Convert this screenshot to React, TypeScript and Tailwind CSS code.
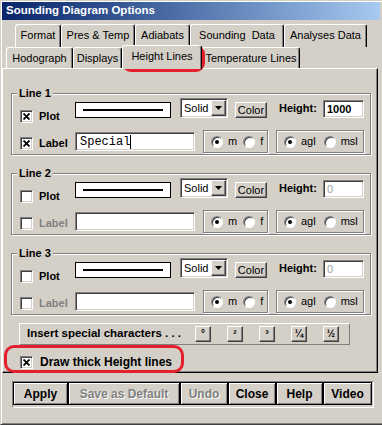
const sunken =
  "border border-t-[#808080] border-l-[#808080] border-r-white border-b-white bg-white shadow-[inset_1px_1px_0_#404040,inset_-1px_-1px_0_#d4d0c8]";
const etched = "border border-[#808080] shadow-[inset_1px_1px_0_#fff,1px_1px_0_#fff]";
const raised =
  "border border-t-white border-l-white border-r-[#404040] border-b-[#404040] bg-[#d4d0c8] shadow-[inset_-1px_-1px_0_#808080]";

function Check({ checked }: { checked?: boolean }) {
  return (
    <span className={`flex h-[13px] w-[13px] shrink-0 items-center justify-center ${sunken}`}>
      {checked && (
        <svg width="7" height="7" viewBox="0 0 7 7">
          <path d="M0.5 0.5L6.5 6.5M6.5 0.5L0.5 6.5" stroke="#000" strokeWidth="1.8" />
        </svg>
      )}
    </span>
  );
}

function Radio({ on }: { on?: boolean }) {
  return (
    <span className="flex h-[12px] w-[12px] shrink-0 items-center justify-center rounded-full border border-t-[#808080] border-l-[#808080] border-r-white border-b-white bg-white shadow-[inset_1px_1px_0_#404040]">
      {on && <span className="h-[4px] w-[4px] rounded-full bg-black" />}
    </span>
  );
}

function Tab({ label, className }: { label: string; className: string }) {
  return (
    <div
      className={`flex justify-center whitespace-pre rounded-t-[3px] border-l border-t border-r border-white border-r-black pt-[4px] text-[11px] leading-[13px] shadow-[inset_-1px_0_0_#808080] ${className}`}
    >
      {label}
    </div>
  );
}

function LineGroup({ n, on }: { n: number; on: boolean }) {
  return (
    <div className={`ml-[8px] h-[62px] w-[360px] pl-[8px] ${etched}`}>
      <div className="-ml-[3px] -mt-[7px] w-fit bg-[#d4d0c8] px-[2px] text-[11px] font-bold leading-[12px]">
        Line {n}
      </div>
      <div className="-mt-[1px] flex items-start">
        <div className="mt-[12px] flex w-[55px] items-center gap-[6px]">
          <Check checked={on} />
          <span className="text-[11px] font-bold leading-[13px]">Plot</span>
        </div>
        <div className="mt-[4px] flex h-[16px] w-[96px] items-center justify-center border border-black bg-white">
          <span className="h-[1.5px] w-[80px] bg-black" />
        </div>
        <div className={`ml-[9px] flex h-[20px] w-[48px] items-center pl-[3px] ${sunken}`}>
          <span className="flex-1 text-[11px] leading-[13px]">Solid</span>
          <span className={`mr-[1px] flex h-[16px] w-[15px] items-center justify-center ${raised}`}>
            <svg width="7" height="4" viewBox="0 0 7 4">
              <path d="M0 0H7L3.5 4Z" fill="#000" />
            </svg>
          </span>
        </div>
        <div className={`ml-[7px] mt-[4px] flex h-[16px] w-[32px] items-center justify-center text-[11px] leading-[13px] ${raised}`}>
          Color
        </div>
        <span className="ml-[12px] flex h-[20px] w-[44px] items-center text-[11px] font-bold">Height:</span>
        <div className={`mt-[2px] flex h-[18px] w-[41px] items-center pl-[3px] text-[11px] ${sunken}`}>
          {on ? <span className="font-bold">1000</span> : <span className="text-[#a0a0a0]">0</span>}
        </div>
      </div>
      <div className="mt-[7px] flex items-start">
        <div className="mt-[7px] flex w-[55px] items-center gap-[6px]">
          <Check checked={on} />
          <span className={`text-[11px] font-bold leading-[13px] ${on ? "text-black" : "text-[#808080]"}`}>Label</span>
        </div>
        <div className={`mt-[2px] flex h-[19px] w-[120px] items-center pl-[4px] ${sunken}`}>
          {on && (
            <>
              <span className="font-['Liberation_Mono',monospace] text-[12px] leading-[14px]">Special</span>
              <span className="h-[14px] w-px bg-black" />
            </>
          )}
        </div>
        <div className={`ml-[8px] flex h-[23px] w-[65px] items-center pl-[7px] text-[11px] ${etched}`}>
          <Radio on />
          <span className="ml-[5px]">m</span>
          <span className="ml-[6px]">
            <Radio />
          </span>
          <span className="ml-[5px]">f</span>
        </div>
        <div className={`ml-[8px] flex h-[23px] w-[88px] items-center pl-[7px] text-[11px] ${etched}`}>
          <Radio on />
          <span className="ml-[5px]">agl</span>
          <span className="ml-[8px]">
            <Radio />
          </span>
          <span className="ml-[5px]">msl</span>
        </div>
      </div>
    </div>
  );
}

function Btn({ label, className, off }: { label: string; className: string; off?: boolean }) {
  return (
    <div
      className={`flex h-[23px] items-center justify-center border border-black text-[12px] font-bold shadow-[inset_1px_1px_0_#fff,inset_-1px_-1px_0_#808080] ${
        off ? "text-[#808080] [text-shadow:1px_1px_0_#fff]" : "text-black"
      } ${className}`}
    >
      {label}
    </div>
  );
}

export default function App() {
  const specials = ["°", "²", "³", "¼", "½"];
  return (
    <div className="relative h-[425px] w-[382px] overflow-hidden border-l border-t border-b border-[#d4d0c8] border-b-[#404040] bg-[#d4d0c8] pl-[1px] pt-[1px] font-['Liberation_Sans',Arial,sans-serif] text-black shadow-[inset_1px_1px_0_#fff,inset_0_-1px_0_#808080]">
      <div className="mr-[2px] flex h-[18px] items-center bg-linear-to-r from-[#0a246a] to-[#a6caf0] pl-[4px] text-[11.5px] font-bold text-white">
        Sounding Diagram Options
      </div>

      <div className="ml-[13px] mt-[4px] flex h-[23px]">
        <Tab label="Format" className="w-[46px]" />
        <Tab label="Pres & Temp" className="w-[74px]" />
        <Tab label="Adiabats" className="w-[55px]" />
        <Tab label="Sounding  Data" className="w-[94px]" />
        <Tab label="Analyses Data" className="w-[83px]" />
      </div>
      <div className="ml-[4px] flex h-[21px]">
        <Tab label="Hodograph" className="w-[67px] bg-[#d4d0c8]" />
        <Tab label="Displays" className="w-[49px] bg-[#d4d0c8]" />
        <Tab label="Height Lines" className="relative z-10 -mt-[2px] h-[24px] w-[80px] bg-[#d4d0c8]" />
        <Tab label="Temperature Lines" className="w-[98px] bg-[#d4d0c8]" />
      </div>

      <div className="h-[305px] w-[376px] border-l border-t border-r border-b border-white border-r-black border-b-black shadow-[inset_-1px_-1px_0_#808080]">
        <div className="pt-[24px]">
          <LineGroup n={1} on />
        </div>
        <div className="pt-[18px]">
          <LineGroup n={2} on={false} />
        </div>
        <div className="pt-[18px]">
          <LineGroup n={3} on={false} />
        </div>

        <div className="ml-[16px] mt-[8px] flex h-[22px] w-[331px] items-center border border-t-white border-l-white border-r-[#808080] border-b-[#808080] pl-[7px]">
          <span className="w-[168px] text-[11.5px] font-bold">Insert special characters . . .</span>
          <div className="flex gap-[16px]">
            {specials.map((s) => (
              <div key={s} className={`flex h-[16px] w-[16px] items-center justify-center text-[10px] font-bold leading-none ${raised}`}>
                {s}
              </div>
            ))}
          </div>
        </div>

        <div className="ml-[17px] mt-[8px] flex items-center gap-[7px]">
          <Check checked />
          <span className="text-[12px] font-bold">Draw thick Height lines</span>
        </div>
      </div>

      <div className="ml-[10px] mt-[8px] flex h-[27px] w-[362px] border border-t-[#808080] border-l-[#808080] border-r-white border-b-white">
        <Btn label="Apply" className="w-[55px]" />
        <Btn label="Save as Default" className="w-[112px]" off />
        <Btn label="Undo" className="w-[48px]" off />
        <Btn label="Close" className="w-[48px]" />
        <Btn label="Help" className="w-[47px]" />
        <Btn label="Video" className="w-[49px]" />
      </div>

      <div className="pointer-events-none absolute left-[121px] top-[44px] h-[27px] w-[83px] rounded-[9px] border-[3px] border-[#e3202c]" />
      <div className="pointer-events-none absolute left-[3px] top-[344px] h-[28px] w-[180px] rounded-[10px] border-[3px] border-[#e3202c]" />
    </div>
  );
}
